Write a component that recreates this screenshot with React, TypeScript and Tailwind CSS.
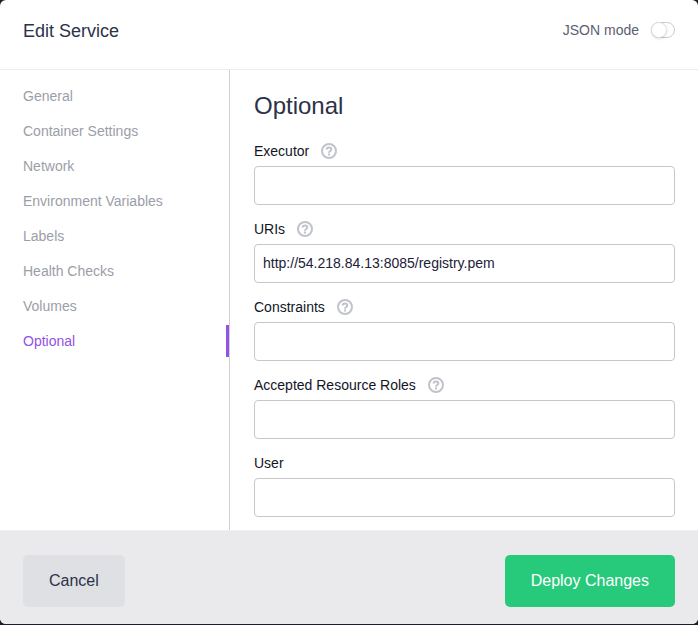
import { useState } from "react";

const sections = [
  "General",
  "Container Settings",
  "Network",
  "Environment Variables",
  "Labels",
  "Health Checks",
  "Volumes",
  "Optional",
];

type FieldSpec = { id: string; label: string; value?: string; help?: boolean };

const fields: FieldSpec[] = [
  { id: "executor", label: "Executor", help: true },
  { id: "uris", label: "URIs", value: "http://54.218.84.13:8085/registry.pem", help: true },
  { id: "constraints", label: "Constraints", help: true },
  { id: "roles", label: "Accepted Resource Roles", help: true },
  { id: "user", label: "User" },
];

function HelpIcon() {
  return (
    <svg viewBox="0 0 16 16" className="size-4" fill="none" stroke="#c1c3cb" strokeWidth="2" aria-hidden="true">
      <circle cx="8" cy="8" r="7" />
      <path d="M5.700 6.600c0-1.300 1-2.200 2.300-2.200s2.300.9 2.300 2.100c0 1.500-2.300 1.500-2.300 3.200" />
      <path d="M8 10.500v2" />
    </svg>
  );
}

function Field({ id, label, value = "", help }: FieldSpec) {
  return (
    <div className="flex flex-col gap-[3px]">
      <div className="flex h-6 items-center gap-3">
        <label htmlFor={id}>{label}</label>
        {help && (
          <button type="button" aria-label={`About ${label}`}>
            <HelpIcon />
          </button>
        )}
      </div>
      <input
        id={id}
        type="text"
        defaultValue={value}
        className="h-[39px] w-full rounded border border-[#c6c7c9] bg-white px-2 pb-0.5 text-[#1b2138] outline-none"
      />
    </div>
  );
}

export default function App() {
  const [active, setActive] = useState("Optional");

  return (
    <div className="min-h-screen bg-[#1b2030] pb-px font-['Liberation_Sans',Arial,sans-serif] text-sm text-[#12151f]">
      <form
        className="flex min-h-[calc(100vh-1px)] flex-col overflow-hidden rounded-md bg-white"
        onSubmit={(e) => e.preventDefault()}
      >
        <header className="flex items-start justify-between px-[23px] pt-[17px] pb-6">
          <h1 className="text-lg text-[#2c3249]">Edit Service</h1>
          <label className="flex h-[26px] items-center gap-3 text-[#5c6070]">
            JSON mode
            <input
              type="checkbox"
              className="flex h-4 w-6 appearance-none items-center rounded-full border border-[#c9cacc] bg-white before:-ml-px before:size-4 before:rounded-full before:border before:border-[#e0e1e3] before:bg-white before:shadow-sm checked:justify-end checked:bg-[#9351e5]"
            />
          </label>
        </header>

        <div className="flex grow border-t border-[#ebecee]">
          <nav className="w-[230px] shrink-0 border-r border-[#cfd0d3] pt-[10px]">
            <ul className="flex flex-col gap-[3px]">
              {sections.map((name) => (
                <li key={name}>
                  <button
                    type="button"
                    onClick={() => setActive(name)}
                    className={
                      name === active
                        ? "h-8 w-full border-r-3 border-[#9351e5] pl-[23px] text-left text-[#9351e5]"
                        : "h-8 w-full pl-[23px] text-left text-[#9b9ea8]"
                    }
                  >
                    {name}
                  </button>
                </li>
              ))}
            </ul>
          </nav>

          <main className="min-w-0 grow pt-5 pr-[23px] pb-3 pl-6">
            <h2 className="text-2xl text-[#2c3249]">Optional</h2>
            <div className="mt-[17px] flex flex-col gap-3">
              {fields.map((field) => (
                <Field key={field.id} {...field} />
              ))}
            </div>
          </main>
        </div>

        <footer className="flex justify-between border-t border-[#efeff0] bg-[#eaeaec] px-[23px] pt-6 pb-[17px] text-base">
          <button type="button" className="h-[52px] rounded-[5px] bg-[#dee0e4] px-[26px] text-[#2c3249]">
            Cancel
          </button>
          <button type="submit" className="h-[52px] rounded-[5px] bg-[#27c97b] px-[26px] text-white">
            Deploy Changes
          </button>
        </footer>
      </form>
    </div>
  );
}
